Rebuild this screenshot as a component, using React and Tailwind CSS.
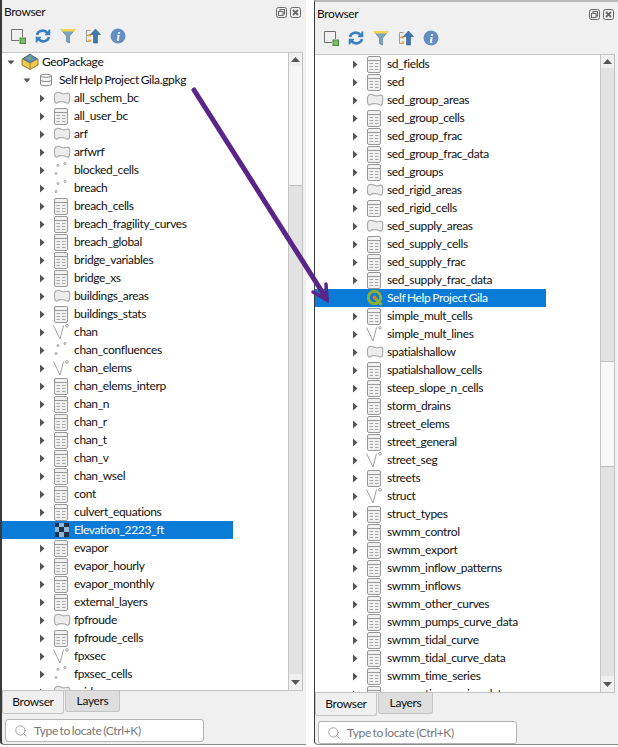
import React from "react";
import { Search } from "lucide-react";

const leftRows = [
  ["arf", "P"], ["arfwrf", "P"], ["blocked_cells", "D"], ["breach", "D"], ["breach_cells", "T"],
  ["breach_fragility_curves", "T"], ["breach_global", "T"], ["bridge_variables", "T"], ["bridge_xs", "T"],
  ["buildings_areas", "P"], ["buildings_stats", "T"], ["chan", "L"], ["chan_confluences", "D"], ["chan_elems", "L"],
  ["chan_elems_interp", "T"], ["chan_n", "T"], ["chan_r", "T"], ["chan_t", "T"], ["chan_v", "T"], ["chan_wsel", "T"],
  ["cont", "T"], ["culvert_equations", "T"], ["Elevation_2223_ft", "R"], ["evapor", "T"], ["evapor_hourly", "T"],
  ["evapor_monthly", "T"], ["external_layers", "T"], ["fpfroude", "P"], ["fpfroude_cells", "T"], ["fpxsec", "L"],
  ["fpxsec_cells", "D"], ["grid", "P"],
];

const rightRows = [
  ["sd_fields", "T"], ["sed", "T"], ["sed_group_areas", "P"], ["sed_group_cells", "T"], ["sed_group_frac", "T"],
  ["sed_group_frac_data", "T"], ["sed_groups", "T"], ["sed_rigid_areas", "P"], ["sed_rigid_cells", "T"],
  ["sed_supply_areas", "P"], ["sed_supply_cells", "T"], ["sed_supply_frac", "T"], ["sed_supply_frac_data", "T"],
  ["Self Help Project Gila", "Q"], ["simple_mult_cells", "T"], ["simple_mult_lines", "L"], ["spatialshallow", "P"],
  ["spatialshallow_cells", "T"], ["steep_slope_n_cells", "T"], ["storm_drains", "T"], ["street_elems", "T"],
  ["street_general", "T"], ["street_seg", "L"], ["streets", "T"], ["struct", "L"], ["struct_types", "T"],
  ["swmm_control", "T"], ["swmm_export", "T"], ["swmm_inflow_patterns", "T"], ["swmm_inflows", "T"],
  ["swmm_other_curves", "T"], ["swmm_pumps_curve_data", "T"], ["swmm_tidal_curve", "T"], ["swmm_tidal_curve_data", "T"],
  ["swmm_time_series", "T"], ["swmm_time_series_data", "T"],
];

const TableIcon = () => (
  <svg width="16" height="17" viewBox="0 0 16 17" fill="none">
    <rect x="1.5" y="0.5" width="13" height="16" rx="1.5" fill="#f1f1f1" stroke="#989898" />
    <path d="M1.5 4.5h13" stroke="#989898" />
    <path d="M3.5 7.5h3.5M9 7.5h3.5M3.5 10.5h3.5M9 10.5h3.5M3.5 13.5h3.5M9 13.5h3.5" stroke="#a8a8a8" />
  </svg>
);

const PolygonIcon = () => (
  <svg width="18" height="14" viewBox="0 0 18 14" fill="none">
    <path d="M2 3C3 1 6 1 9 2.5S14 1 16 2.5C17.5 4 16.5 7 16.5 9S16 12.5 14 12C11.5 10.5 6 10 4 12C2 12.5 1.5 10 1.5 8S1 5 2 3Z" fill="#ececec" stroke="#ababab" strokeWidth="1.2" />
  </svg>
);

const PointIcon = () => (
  <svg width="16" height="16" viewBox="0 0 16 16" fill="none" stroke="#9a9a9a">
    <circle cx="3" cy="11.5" r="1" />
    <circle cx="5" cy="3.5" r="1" />
    <circle cx="12" cy="1.5" r="1" />
  </svg>
);

const LineIcon = () => (
  <svg width="18" height="16" viewBox="0 0 18 16" fill="none" stroke="#a0a0a0">
    <path d="M0.5 1.5L7 15L10.5 1.5" />
    <circle cx="14" cy="1.8" r="1.3" />
  </svg>
);

const RasterIcon = () => (
  <svg width="14" height="14" viewBox="0 0 14 14" className="ml-[2px]">
    <rect width="14" height="14" fill="#fff" />
    <path d="M0 0h4v4H0zM9 0h5v4H9zM4 4h5v5H4zM0 9h4v5H0zM9 9h5v5H9z" fill="#20324a" />
    <path d="M4 0h5v4H4zM0 4h4v5H0zM9 4h5v5H9zM4 9h5v5H4z" fill="#8fb6d9" />
  </svg>
);

const QgisIcon = () => (
  <svg width="18" height="18" viewBox="0 0 18 18" fill="none">
    <circle cx="8.5" cy="8.5" r="6.2" stroke="#8ab034" strokeWidth="3" />
    <path d="M9 9L15.5 16" stroke="#8ab034" strokeWidth="3" />
    <circle cx="8.5" cy="8.5" r="2" fill="#ee7913" />
  </svg>
);

const GpkgIcon = () => (
  <svg width="18" height="18" viewBox="0 0 18 18" className="shrink-0">
    <path d="M1 6L9 2L17 6L17 12L9 16.5L1 12Z" fill="#efc94c" stroke="#6d5a1c" strokeWidth="0.8" />
    <path d="M2 6L9 10L16 6L9 1Z" fill="#5d8ec0" stroke="#4a5b6c" strokeWidth="0.8" />
    <path d="M6 5L9 3.5L11 5L8 7Z" fill="#7fb069" />
    <path d="M9 10V16.5" stroke="#9c8430" />
  </svg>
);

const DbIcon = () => (
  <svg width="14" height="14" viewBox="0 0 14 14" fill="#f6f6f6" stroke="#8b8b8b" className="shrink-0">
    <path d="M1.5 2.8C1.5 0.8 12.5 0.8 12.5 2.8V11.2C12.5 13.2 1.5 13.2 1.5 11.2Z" />
    <path d="M1.5 2.8C1.5 4.8 12.5 4.8 12.5 2.8M1.5 7C1.5 9 12.5 9 12.5 7" fill="none" />
  </svg>
);

const icons = { T: TableIcon, P: PolygonIcon, D: PointIcon, L: LineIcon, R: RasterIcon, Q: QgisIcon };

const Caret = ({ open }) =>
  open ? (
    <svg width="9" height="9" viewBox="0 0 9 9" className="shrink-0"><path d="M0.5 2.5h7L4 6.5z" fill="#555" /></svg>
  ) : (
    <svg width="9" height="9" viewBox="0 0 9 9" className="shrink-0"><path d="M2 0.5v8l4.5-4z" fill="#555" /></svg>
  );

const Row = ({ name, kind }) => {
  const Icon = icons[kind];
  const selected = kind === "R" || kind === "Q";
  return (
    <div className={`flex h-[18px] shrink-0 items-center ${selected ? "w-[231px] bg-[#0a7bd6] text-white" : ""}`}>
      <div className="flex h-full w-[50px] shrink-0 items-center pl-[36px]">{!selected && <Caret />}</div>
      <span className="flex h-full w-[22px] shrink-0 items-center pl-[1px]">
        <Icon />
      </span>
      <span className="whitespace-nowrap">{name}</span>
    </div>
  );
};

const Scrollbar = ({ thumb }) => (
  <div className="flex w-[15px] shrink-0 flex-col border-x border-[#c4c4c4] bg-[#e3e3e3]">
    <div className="flex h-[13px] shrink-0 items-center justify-center bg-[#f0f0f0]">
      <svg width="9" height="5" viewBox="0 0 9 5"><path d="M0 5h9L4.5 0z" fill="#555" /></svg>
    </div>
    <div className="min-h-0 flex-1">{thumb}</div>
    <div className="flex h-[16px] shrink-0 items-center justify-center bg-[#f0f0f0]">
      <svg width="9" height="5" viewBox="0 0 9 5"><path d="M0 0h9L4.5 5z" fill="#555" /></svg>
    </div>
  </div>
);

const Toolbar = () => (
  <div className="flex h-[29px] items-start gap-[9px] pl-[8px] pt-[5px]">
    <svg width="16" height="16" viewBox="0 0 16 16" fill="none">
      <path d="M12.5 9V1.5H1.5V12.5H9" stroke="#6f6f6f" />
      <rect x="10" y="10" width="5.5" height="5.5" fill="#7dbb6b" stroke="#4b8a46" />
    </svg>
    <svg width="16" height="16" viewBox="0 0 16 16" fill="none" stroke="#3a80c2" strokeWidth="2.6">
      <path d="M2 7C3 2.5 9.5 1 12.5 5" />
      <path d="M14 9C13 13.5 6.5 15 3.5 11" />
      <path d="M14.5 1.5V6.5H10M1.5 14.5V9.5H6" strokeWidth="1.6" fill="#3a80c2" />
    </svg>
    <svg width="16" height="16" viewBox="0 0 16 16">
      <path d="M1 1.5H15L9.5 8V15L6.5 13.5V8Z" fill="#7da3bf" stroke="#5e84a2" strokeWidth="0.8" />
      <rect x="1" y="1" width="14" height="2.5" fill="#f1d652" />
    </svg>
    <svg width="16" height="16" viewBox="0 0 16 16" fill="none">
      <path d="M1.5 2.5H5.5M1.5 2.5V13.5M1.5 7.5H4M1.5 13.5H4" stroke="#9d9d9d" />
      <rect x="3.5" y="6" width="2.5" height="2.5" fill="#f0a12e" />
      <rect x="3.5" y="11.5" width="2.5" height="2.5" fill="#f0a12e" />
      <path d="M10.5 1L15.5 6.5H12.5V15H8.5V6.5H5.5Z" fill="#3f78ad" stroke="#2d5b86" strokeWidth="0.6" />
    </svg>
    <svg width="16" height="16" viewBox="0 0 16 16">
      <circle cx="8" cy="8" r="7.5" fill="#628fbf" />
      <text x="8" y="12.5" textAnchor="middle" fontSize="12" fontWeight="700" fontStyle="italic" fontFamily="Liberation Serif, serif" fill="#fff">i</text>
    </svg>
  </div>
);

const Title = ({ className }) => (
  <div className={`flex h-[22px] items-center justify-between pl-[2px] ${className}`}>
    <span>Browser</span>
    <div className="flex gap-[3px]">
      <svg width="11" height="11" viewBox="0 0 11 11" fill="none" stroke="#666">
        <rect x="0.5" y="0.5" width="10" height="10" rx="2" />
        <rect x="4" y="2.5" width="4.5" height="4.5" />
        <rect x="2.5" y="4.5" width="4.5" height="4" fill="#f0f0f0" />
      </svg>
      <svg width="11" height="11" viewBox="0 0 11 11" fill="none" stroke="#666">
        <rect x="0.5" y="0.5" width="10" height="10" rx="2" />
        <path d="M3 3L8 8M8 3L3 8" strokeWidth="1.8" />
      </svg>
    </div>
  </div>
);

const Tabs = () => (
  <div className="flex h-[23px] items-start">
    <div className="flex h-[23px] w-[62px] items-center justify-center rounded-b-[3px] border border-t-0 border-[#c4c4c4] bg-[#f0f0f0]">Browser</div>
    <div className="ml-px flex h-[21px] w-[55px] items-center justify-center rounded-b-[3px] border border-t-0 border-[#c4c4c4] bg-[#dedede]">Layers</div>
  </div>
);

const Locator = () => (
  <div className="ml-[3px] mt-[5px] flex h-[23px] w-[199px] items-center gap-[6px] rounded-[3px] border border-[#b4b4b4] bg-white pl-[8px] text-[#777]">
    <Search size={14} strokeWidth={1.3} color="#8a8a8a" />
    <span>Type to locate (Ctrl+K)</span>
  </div>
);

export default function App() {
  return (
    <div
      className="relative h-[747px] w-[618px] overflow-hidden bg-white text-[12px] leading-none tracking-[-0.35px] text-[#111] [word-spacing:-1px]"
      style={{ fontFamily: 'Lato, "Open Sans", sans-serif' }}
    >
      <div className="flex h-full">
        {/* left dock */}
        <div className="flex h-[745px] w-[306px] shrink-0 flex-col rounded-bl-[4px] border-b border-l-2 border-[#3a3a3a] border-b-[#8a8a8a] bg-[#f0f0f0] pr-[3px] pt-px">
          <Title className="pr-[2px]" />
          <Toolbar />
          <div className="flex h-[639px] shrink-0 border-y border-[#c4c4c4] bg-white">
            <div className="min-w-0 flex-1 overflow-hidden">
              <div className="flex h-[18px] items-center pl-[5px]">
                <Caret open />
                <span className="ml-[5px] flex"><GpkgIcon /></span>
                <span className="ml-[3px]">GeoPackage</span>
              </div>
              <div className="flex h-[18px] items-center pl-[21px]">
                <Caret open />
                <span className="ml-[7px] flex"><DbIcon /></span>
                <span className="ml-[6px]">Self Help Project Gila.gpkg</span>
              </div>
              <Row name="all_schem_bc" kind="P" />
              <Row name="all_user_bc" kind="T" />
              {leftRows.map(([name, kind]) => (
                <Row key={name} name={name} kind={kind} />
              ))}
            </div>
            <Scrollbar thumb={<div className="h-[120px] border-b border-[#bdbdbd] bg-[#f6f6f6]" />} />
          </div>
          <Tabs />
          <Locator />
        </div>

        {/* gap between the two screenshots */}
        <div className="w-[8px] shrink-0" />

        {/* right dock */}
        <div className="flex h-[745px] w-[304px] shrink-0 flex-col rounded-bl-[4px] border-b border-l border-t-2 border-[#3a3a3a] border-b-[#8a8a8a] border-t-[#b8b8b8] bg-[#f0f0f0] pr-[3px] pt-px">
          <Title className="pr-[1px]" />
          <Toolbar />
          <div className="flex h-[639px] shrink-0 border-y border-[#c4c4c4] bg-white">
            <div className="min-w-0 flex-1 overflow-hidden">
              {rightRows.map(([name, kind]) => (
                <Row key={name} name={name} kind={kind} />
              ))}
            </div>
            <Scrollbar thumb={<div className="mt-[293px] h-[106px] border-y border-[#bdbdbd] bg-[#f8f8f8]" />} />
          </div>
          <Tabs />
          <Locator />
        </div>
      </div>

      {/* annotation arrow laid over both docks */}
      <svg className="absolute left-0 top-0" width="618" height="747" fill="none" stroke="#5b2488" strokeLinecap="round">
        <path d="M194 90L326 298" strokeWidth="5" />
        <path d="M313 292L327 300L326 284" strokeWidth="3.5" />
      </svg>
    </div>
  );
}
